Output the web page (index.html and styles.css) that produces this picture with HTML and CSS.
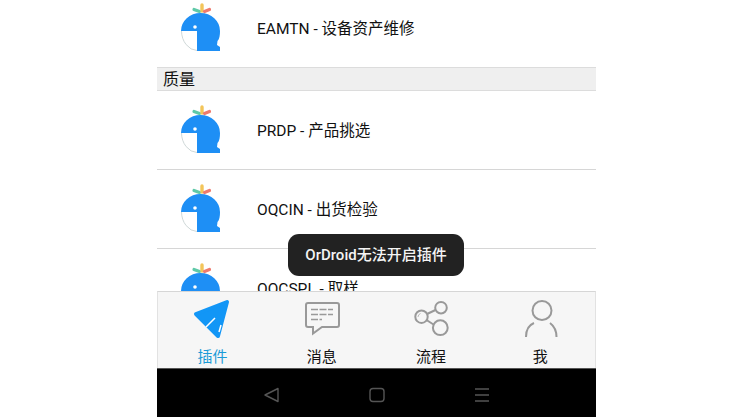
FILE: index.html
```html
<!DOCTYPE html>
<html>

<head>
  <meta charset="utf-8">
  <meta name="viewport" content="width=device-width">
  <title>插件</title>
  <link rel="stylesheet" href="styles.css">
</head>

<body>
  <svg class="defs" width="0" height="0">
    <symbol id="whale" viewBox="0 0 40 50">
      <path d="M13 7.5 L18.5 9.5" stroke="#5fc9a8" stroke-width="3.2" stroke-linecap="round" />
      <path d="M21 3 V9" stroke="#f3c55a" stroke-width="3.4" stroke-linecap="round" />
      <path d="M23.5 9.5 L28.5 7.5" stroke="#ee7b6e" stroke-width="3.2" stroke-linecap="round" />
      <path d="M0 29 A19.5 18 0 0 1 39 29 C39 33 38.5 37 36.5 39 L36 43 L39 45 V49 H16 V29 Z" fill="#1e8ff5" />
      <path d="M0.5 29 A16 20 0 0 0 16 48.5" fill="#fff" stroke="#cfd8d8" />
      <circle cx="14" cy="25" r="1.8" fill="#fff" />
    </symbol>
  </svg>

  <div class="phone">
    <div class="list">
      <div class="row first">
        <svg class="whale"><use href="#whale" /></svg>
        <span>EAMTN - 设备资产维修</span>
      </div>
      <div class="section">质量</div>
      <div class="row">
        <svg class="whale"><use href="#whale" /></svg>
        <span>PRDP - 产品挑选</span>
      </div>
      <div class="row">
        <svg class="whale"><use href="#whale" /></svg>
        <span>OQCIN - 出货检验</span>
      </div>
      <div class="row">
        <svg class="whale"><use href="#whale" /></svg>
        <span>OQCSPL - 取样</span>
      </div>
    </div>

    <div class="tabs">
      <div class="tab active">
        <svg width="40" height="42" viewBox="0 0 40 42">
          <path d="M3 15 L34 3 L25 37 Z" fill="#1296f6" stroke="#1296f6" stroke-width="4" stroke-linejoin="round" />
          <path d="M13 28 L22 19 M26 33 L28 26" stroke="#fff" stroke-width="1.5" />
        </svg>
        <span>插件</span>
      </div>
      <div class="tab">
        <svg width="40" height="42" viewBox="0 0 40 42">
          <path d="M6 4 H35 Q37 4 37 6 V26 Q37 28 35 28 H20 L11 34.5 V28 H6 Q4 28 4 26 V6 Q4 4 6 4 Z" fill="none" stroke="#999" stroke-width="2" />
          <path d="M9 10.5 H31 M9 15.5 H31 M9 20.5 H20" stroke="#999" stroke-width="1.3" stroke-dasharray="7 1.5" />
        </svg>
        <span>消息</span>
      </div>
      <div class="tab">
        <svg width="40" height="42" viewBox="0 0 40 42">
          <circle cx="10.5" cy="17.7" r="6.2" fill="none" stroke="#999" stroke-width="2" />
          <circle cx="30" cy="8.7" r="5.8" fill="none" stroke="#999" stroke-width="2" />
          <circle cx="29.3" cy="28.7" r="7.4" fill="none" stroke="#999" stroke-width="2" />
          <path d="M16 15 L24.5 11 M15.5 21 L22.5 25.5" stroke="#999" stroke-width="2" />
          <path d="M7 18 A4 4 0 0 1 9.5 14.5" fill="none" stroke="#bbb" />
        </svg>
        <span>流程</span>
      </div>
      <div class="tab">
        <svg width="40" height="42" viewBox="0 0 40 42">
          <circle cx="22" cy="11.5" r="9.5" fill="none" stroke="#999" stroke-width="2" />
          <path d="M6 38 C6 31 9 26 14 24 M36.5 38 C36.5 32 34 27 30 24" fill="none" stroke="#999" stroke-width="2" />
        </svg>
        <span>我</span>
      </div>
    </div>

    <div class="navbar">
      <svg width="16" height="16" viewBox="0 0 16 16">
        <path d="M2 8 L15 1.5 V14.5 Z" fill="none" stroke="#555" stroke-width="1.4" stroke-linejoin="round" />
      </svg>
      <svg width="16" height="16" viewBox="0 0 16 16">
        <rect x="1" y="1.5" width="14" height="13" rx="3" fill="none" stroke="#555" stroke-width="1.4" />
      </svg>
      <svg width="16" height="16" viewBox="0 0 16 16">
        <path d="M1 2 H15 M1 8 H15 M1 14 H15" stroke="#555" stroke-width="1.4" />
      </svg>
    </div>

    <div class="toast">OrDroid无法开启插件</div>
  </div>
</body>

</html>
```

FILE: styles.css
```css
html {
  height: 100%;
  width: 100%;
}

body {
  margin: 0;
  background-color: #fff;
  color: #111;
  font-family: Roboto, "Noto Sans CJK SC", sans-serif;
  overflow: hidden;
}

.defs {
  position: absolute;
}

.phone {
  position: relative;
  display: flex;
  flex-direction: column;
  width: 439px;
  height: 417px;
  margin-left: 157px;
  overflow: hidden;
}

.list {
  flex: 1;
  min-height: 0;
  overflow: hidden;
}

.row {
  display: flex;
  flex: none;
  align-items: center;
  height: 76px;
  padding-bottom: 2px;
  border-bottom: 1px solid #d6d6d6;
  font-size: 15.5px;
}

.row.first {
  margin-top: -11px;
  border-bottom: 0;
}

.whale {
  flex: none;
  width: 40px;
  height: 50px;
  margin: 0 36px 0 24px;
}

.section {
  height: 22px;
  padding-left: 6px;
  background-color: #efefef;
  border-top: 1px solid #dcdcdc;
  border-bottom: 1px solid #dcdcdc;
  font-size: 16px;
  line-height: 24px;
}

.tabs {
  display: flex;
  flex: none;
  height: 77px;
  background-color: #f6f6f6;
  border-top: 1px solid #d6d6d6;
  border-left: 1px solid #e2e2e2;
  border-right: 1px solid #e2e2e2;
  box-sizing: border-box;
}

.tab {
  display: flex;
  flex: 1;
  flex-direction: column;
  align-items: center;
  padding-top: 7px;
  font-size: 15px;
  line-height: 20px;
}

.tab svg {
  display: block;
  margin-bottom: 6px;
}

.tab.active {
  color: #1a9bd7;
}

.navbar {
  display: flex;
  flex: none;
  align-items: center;
  justify-content: space-between;
  height: 49px;
  padding: 3px 106px 0 106px;
  background-color: #000;
  border-top: 1px solid #555;
  box-sizing: border-box;
}

.toast {
  position: absolute;
  top: 234px;
  left: 131px;
  width: 176px;
  height: 42px;
  border-radius: 11px;
  background-color: #222;
  color: #f4f4f4;
  font-size: 15px;
  font-weight: 500;
  line-height: 42px;
  text-align: center;
}
```
